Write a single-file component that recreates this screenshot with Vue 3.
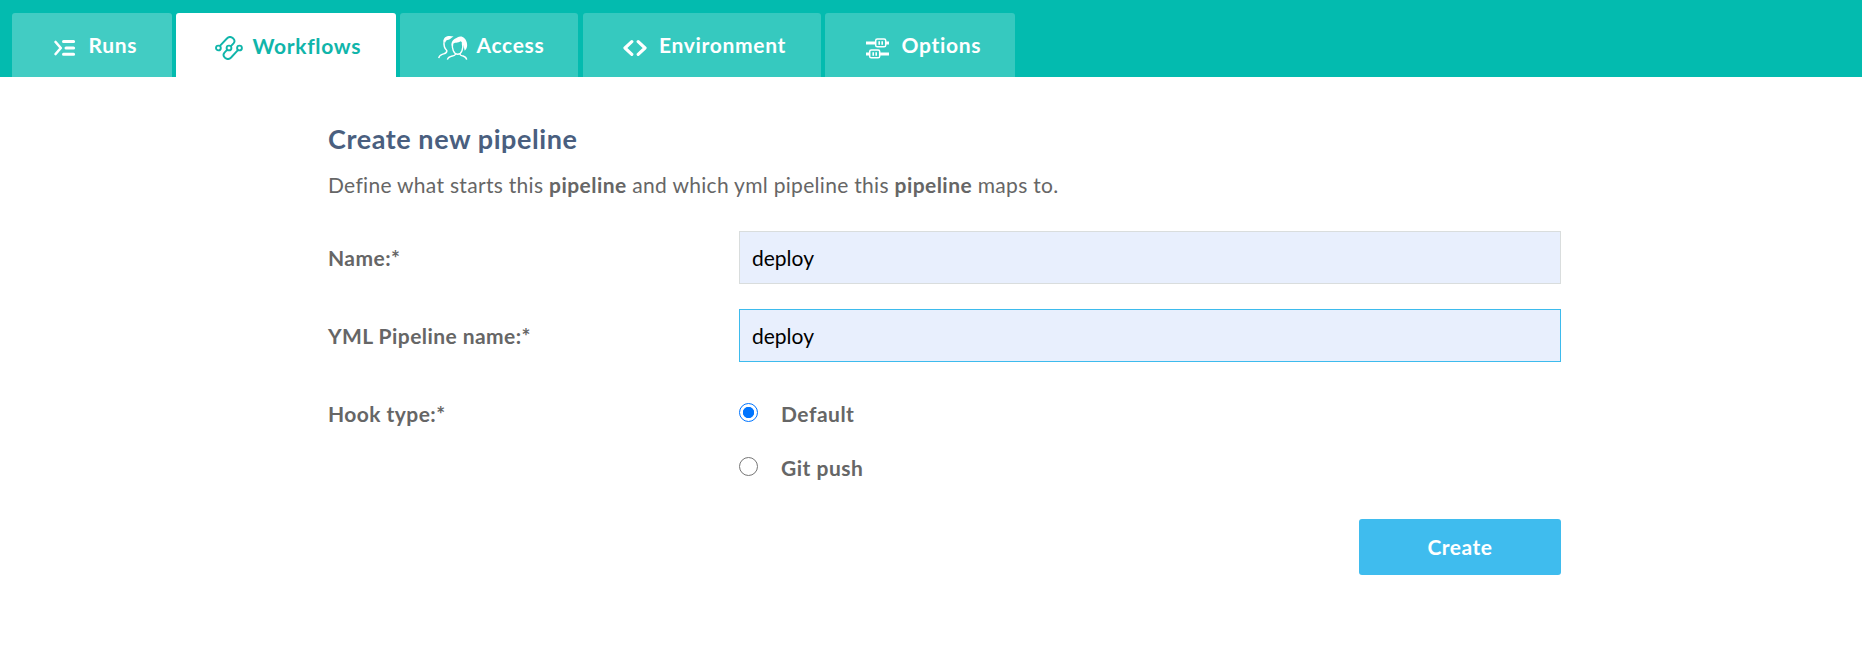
<script setup>
import { ref } from 'vue'

const tabs = [
  { id: 'runs', label: 'Runs' },
  { id: 'workflows', label: 'Workflows' },
  { id: 'access', label: 'Access' },
  { id: 'environment', label: 'Environment' },
  { id: 'options', label: 'Options' },
]
const active = ref('workflows')
const name = ref('deploy')
const ymlName = ref('deploy')
const hook = ref('default')
const hooks = [
  { id: 'default', label: 'Default' },
  { id: 'push', label: 'Git push' },
]
</script>

<template>
  <div class="page">
    <nav class="tabs">
      <a v-for="t in tabs" :key="t.id" class="tab" :class="[t.id, { active: active === t.id }]" @click="active = t.id">
        <svg v-if="t.id === 'runs'" class="icon" width="22" height="16" viewBox="0 0 22 16" fill="none" stroke="currentColor" stroke-width="3" stroke-linecap="round" stroke-linejoin="round">
          <path d="M1.6 2 L6.8 8 L1.6 14" stroke-width="2.6" />
          <path d="M9.500 1.600 H19.600 M12 8 H19.600 M9.500 14.200 H19.600" stroke-width="3" />
        </svg>
        <svg v-else-if="t.id === 'workflows'" class="icon" width="28" height="24" viewBox="0 0 28 24" fill="none" stroke="currentColor" stroke-width="1.9">
          <path d="M4.900 9.900 L11.900 2.500 C13.700 .7 16.200 .7 18 2.200 C19.900 3.900 20 5.600 18.500 7.400 L15.700 10.300" />
          <path d="M22.900 14.100 L16.100 21.500 C14.300 23.300 11.800 23.300 10 21.800 C8.100 20.100 8 18.400 9.500 16.600 L12.300 13.700" />
          <circle cx="3.400" cy="12" r="2.400" />
          <circle cx="14" cy="12" r="2.400" />
          <circle cx="24.500" cy="12" r="2.400" />
        </svg>
        <svg v-else-if="t.id === 'access'" class="icon" width="31" height="25" viewBox="0 0 31 25" fill="none" stroke="currentColor" stroke-width="1.400">
          <path d="M6.200 5.500 C5.300 11 6.700 13.600 8.800 15.500 C9.300 18.500 7 18.400 4.200 19.400 C2 20.200 1 21.400 .7 23.200" />
          <path d="M5.400 6.300 C5.600 1.500 10 .2 15.600 1.600 C13 3 12.300 4.500 10.600 4.800 C8.500 5.100 7.800 5.700 7.400 7.500 Z" fill="currentColor" stroke="none" />
          <path d="M14.700 7.600 C13.400 13.500 16 19.300 19.700 19.300 C23.500 19.300 25.800 13.500 24.400 8" />
          <path d="M17.500 18.600 C17.600 20.400 16.600 20.400 14.300 21 C11.500 21.700 9.900 22.700 9.400 24.600 M21.900 18.600 C21.800 20.400 22.800 20.400 25.100 21 C27.400 21.700 28.300 22.700 28.700 24.600" />
          <path d="M13.500 11 C13.100 6 15.500 4.500 19.200 2.600 C23.500 -.2 27.500 2.800 28.800 7.500 C29.600 10.800 29.100 14 26.700 15.700 C25.900 11.700 24.700 8.500 22.900 6.300 C20 8 16 7.300 14.700 9.200 Z" fill="currentColor" stroke="none" />
        </svg>
        <svg v-else-if="t.id === 'environment'" class="icon" width="24" height="16" viewBox="0 0 24 16" fill="none" stroke="currentColor" stroke-width="3.2" stroke-linecap="round" stroke-linejoin="round">
          <path d="M8.800 1.700 L2 8 L8.800 14.300 M15.200 1.700 L22 8 L15.200 14.300" />
        </svg>
        <svg v-else class="icon" width="24" height="21" viewBox="0 0 24 21" fill="none" stroke="currentColor">
          <path d="M0 5 H9.500 M20 5 H23 M0 16 H3.500 M14 16 H23" stroke-width="3" />
          <rect x="9.700" y="1" width="10" height="7.800" rx="1.600" stroke-width="1.500" />
          <rect x="3.700" y="12" width="10" height="7.800" rx="1.600" stroke-width="1.500" />
          <path d="M13.200 3.200 V6.800 M16.200 3.200 V6.800 M7.200 14.200 V17.800 M10.200 14.200 V17.800" stroke-width="1.600" />
        </svg>
        <span>{{ t.label }}</span>
      </a>
    </nav>

    <form class="form" @submit.prevent>
      <h1>Create new pipeline</h1>
      <p>Define what starts this <b>pipeline</b> and which yml pipeline this <b>pipeline</b> maps to.</p>

      <div class="row">
        <label for="name">Name:*</label>
        <input id="name" v-model="name" class="field" type="text" />
      </div>
      <div class="row">
        <label for="yml">YML Pipeline name:*</label>
        <input id="yml" v-model="ymlName" class="field focused" type="text" />
      </div>
      <div class="row hook-row">
        <span class="caption">Hook type:*</span>
        <div class="choices">
          <label v-for="h in hooks" :key="h.id" class="choice">
            <input v-model="hook" type="radio" name="hook" :value="h.id" />
            <span>{{ h.label }}</span>
          </label>
        </div>
      </div>
      <div class="actions"><button type="submit">Create</button></div>
    </form>
  </div>
</template>

<style>
body { background: #fff; }
</style>

<style scoped>
.page {
  box-sizing: border-box;
  min-height: 666px;
  font-family: Lato, "Liberation Sans", sans-serif;
  font-size: 21px;
  line-height: 30px;
  color: #666;
}
.tabs {
  display: flex;
  box-sizing: border-box;
  height: 77px;
  padding: 13px 0 0 12px;
  background: #03bbaf;
}
.tab {
  box-sizing: border-box;
  display: flex;
  height: 64px;
  margin-right: 4px;
  border-radius: 3px 3px 0 0;
  background: #36c9bf;
  color: #fff;
  font-weight: 700;
  letter-spacing: 0.68px;
  cursor: pointer;
}
.tab span { margin-top: 17px; white-space: nowrap; }
.icon { flex: none; }
.runs { width: 160px; padding-left: 42px; background: #42ccc3; }
.runs .icon { margin: 27px 12.500px 0 0; }
.workflows { width: 220px; padding-left: 39px; }
.workflows .icon { margin: 23px 9.500px 0 0; }
.workflows span { margin-top: 18px; }
.active { background: #fff; color: #10b5aa; }
.access { width: 178px; margin-right: 5px; padding-left: 38px; }
.access .icon { margin: 22px 7.500px 0 0; }
.environment { width: 238px; padding-left: 40px; }
.environment .icon { margin: 27px 12px 0 0; }
.options { width: 190px; padding-left: 41px; }
.options .icon { margin: 25px 11.500px 0 0; }

.form { width: 1233px; margin: 0 0 0 328px; }
h1 {
  margin: 0;
  padding-top: 44px;
  font-size: 27px;
  line-height: 36px;
  font-weight: 700;
  letter-spacing: 0.57px;
  color: #4a5f7f;
}
p { margin: 13px 0 31px; letter-spacing: 0.3px; }
p b { letter-spacing: 0.45px; }
.row { display: grid; grid-template-columns: 411px 822px; height: 78px; align-items: start; }
.row > label, .caption { margin-top: 12px; font-weight: 700; letter-spacing: 0.44px; }
.field {
  box-sizing: border-box;
  width: 822px;
  height: 53px;
  padding: 0 12px;
  border: 1px solid #d9dddd;
  border-radius: 0;
  outline: 0;
  background: #e8effd;
  color: #000;
  font: inherit;
  letter-spacing: 0;
}
.focused { border-color: #3dbbed; }
.hook-row { height: 132px; }
.choices { display: flex; flex-direction: column; gap: 24px; padding-top: 12px; }
.choice { display: flex; height: 30px; font-weight: 700; letter-spacing: 0.5px; }
.choice input {
  appearance: none;
  box-sizing: border-box;
  width: 19px;
  height: 19px;
  margin: 4px 23px 0 0;
  border: 1px solid #767676;
  border-radius: 50%;
  background: #fff;
}
.choice input:checked { border-color: #0075ff; background: radial-gradient(circle, #0075ff 5.300px, #fff 6px); }
.actions { display: flex; justify-content: flex-end; }
button {
  width: 202px;
  height: 56px;
  padding: 0;
  border: 0;
  border-radius: 3px;
  background: #3fbcee;
  color: #fff;
  font: inherit;
  font-weight: 700;
  letter-spacing: 0.5px;
}
</style>
